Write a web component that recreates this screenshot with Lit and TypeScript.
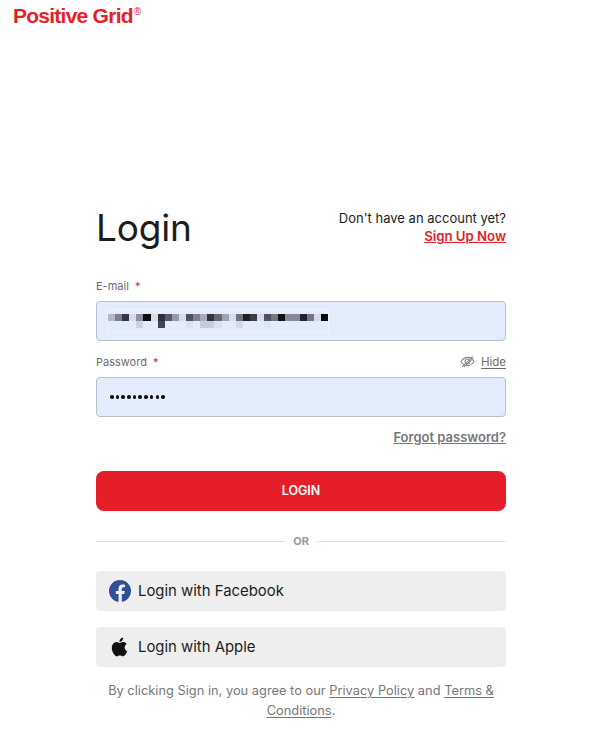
import { LitElement, html, css } from 'lit';
import { customElement } from 'lit/decorators.js';

// mosaic that hides the e-mail address, one colour per 7px cell ('' = empty)
const ROW_1 = [
  '#b4b8c6', '#7c808c', '#34363e', '#d6dcea', '#8e929e', '#0e0e12', '#d6dcea', '#2e3038', '#585a66', '#949aa8',
  '#d6dcea', '#50525c', '#7e828e', '#a8acb8', '#34363e', '#666874', '#a0a4b0', '#d6dcea', '#70747e', '#1e2026',
  '#3c3e48', '#d6dcea', '#50525c', '#747884', '#111318', '#868a96', '#868a96', '#22242a', '#747884', '#d6dcea', '#07080a',
];
const ROW_2 = [
  '', '', '', '', '#cdd2de', '', '', '#44464f', '', '',
  '', '#dae0ec', '', '#c8ccd8', '#c8ccd8', '#dae0ec', '', '', '#d4d9e5', '',
  '', '', '#dde4f2', '', '', '', '', '', '', '', '',
];

@customElement('app-root')
export class AppRoot extends LitElement {
  static styles = css`
    :host {
      display: block;
      background: #fff;
      height: 736px;
      overflow: hidden;
      font-family: 'Inter', 'Liberation Sans', sans-serif;
      color: #1c1c1c;
    }
    .logo {
      display: flex;
      align-items: flex-start;
      padding: 4px 0 0 13px;
      height: 172px;
      color: #e51e29;
      font-family: 'Liberation Sans', sans-serif;
      font-weight: 700;
      font-size: 21px;
      line-height: 24px;
      letter-spacing: -0.75px;
    }
    .logo sup {
      font-size: 10px;
      line-height: 10px;
      letter-spacing: 0;
      margin: 3px 0 0 1px;
      font-weight: 400;
    }
    main {
      width: 410px;
      margin-left: 96px;
    }
    .head {
      display: flex;
      justify-content: space-between;
      align-items: flex-start;
      box-sizing: border-box;
      height: 100px;
      padding-top: 28px;
    }
    h1 {
      margin: 0;
      font-size: 37px;
      font-weight: 400;
      line-height: 48px;
      letter-spacing: -0.2px;
    }
    .signup {
      text-align: right;
      font-size: 13px;
      line-height: 18px;
      padding-top: 5px;
    }
    .signup a {
      display: block;
      color: #e51e29;
      font-weight: 600;
      font-size: 13.2px;
      text-decoration: underline;
    }
    .label-row {
      display: flex;
      justify-content: space-between;
      align-items: center;
      box-sizing: border-box;
      height: 18px;
      padding-top: 1px;
      margin-bottom: 7px;
      font-size: 11px;
      color: #6b6b6b;
    }
    .label-row b {
      color: #e51e29;
      font-weight: 400;
      margin-left: 3px;
    }
    .hide {
      display: flex;
      align-items: center;
      gap: 6px;
      font-size: 11.5px;
    }
    .hide svg {
      width: 15px;
      height: 15px;
    }
    .hide u {
      text-underline-offset: 2px;
    }
    .field {
      display: flex;
      align-items: center;
      height: 40px;
      box-sizing: border-box;
      background: #e2ecfb;
      border: 1px solid #bcc0c6;
      border-radius: 4px;
      padding-left: 10px;
      margin-bottom: 11px;
    }
    .mosaic {
      display: grid;
      grid-template-columns: repeat(31, 7.1px);
      grid-auto-rows: 7px;
      align-content: center;
      height: 24px;
      width: 222px;
      border: 1px solid #edf3fd;
      box-sizing: border-box;
    }
    .dots {
      display: flex;
      gap: 2.1px;
      padding-left: 3px;
    }
    .dots i {
      width: 3.6px;
      height: 3.6px;
      border-radius: 50%;
      background: #111;
    }
    .forgot {
      text-align: right;
      font-size: 13px;
      line-height: 18px;
      font-weight: 600;
      color: #77777a;
      text-decoration: underline;
    }
    .login {
      height: 40px;
      box-sizing: border-box;
      padding-bottom: 2px;
      margin-top: 25px;
      border-radius: 8px;
      background: #e51e29;
      color: #fff;
      font-size: 12.5px;
      font-weight: 600;
      display: flex;
      align-items: center;
      justify-content: center;
    }
    .or {
      display: flex;
      align-items: center;
      gap: 8px;
      margin: 20px 0 20px;
      height: 20px;
      font-size: 11px;
      font-weight: 700;
      color: #999;
    }
    .or::before,
    .or::after {
      content: '';
      flex: 1;
      height: 1px;
      background: #e2e2e4;
    }
    .social {
      display: flex;
      align-items: center;
      gap: 7px;
      height: 40px;
      margin-bottom: 16px;
      padding-left: 13px;
      border-radius: 4px;
      background: #eeeeee;
      font-size: 14.9px;
    }
    .social span {
      margin-top: -1px;
    }
    .social svg {
      width: 22px;
      height: 22px;
      flex: none;
    }
    .terms {
      margin: -2px 0 0;
      text-align: center;
      font-size: 12.85px;
      line-height: 20px;
      color: #77777a;
    }
    .terms u {
      text-underline-offset: 2px;
    }
  `;

  private eyeOff() {
    return html`<svg viewBox="0 0 16 16" fill="none" stroke="#8a8a8a" stroke-width="1.1">
      <path d="M1 8c2-3 4.3-4.4 7-4.4S13 5 15 8c-2 3-4.3 4.4-7 4.4S3 11 1 8z"/>
      <circle cx="8" cy="8" r="2.6"/>
      <path d="M2.5 13.5 13.5 2.5M4 14 14.5 4"/>
    </svg>`;
  }

  private facebook() {
    return html`<svg viewBox="0 0 24 24">
      <circle cx="12" cy="12" r="12" fill="#2f4f93"/>
      <path fill="#eee" d="M16.7 15.4l.5-3.4H14V9.8c0-.9.5-1.8 1.9-1.8h1.5V5.1S16 4.9 14.8 4.9c-2.7 0-4.4 1.6-4.4 4.6V12h-3v3.4h3V24h3.6v-8.6z"/>
    </svg>`;
  }

  private apple() {
    return html`<svg viewBox="0 0 24 24">
      <path fill="#111" d="M17.05 12.54c-.03-2.6 2.12-3.85 2.22-3.91-1.21-1.77-3.09-2.01-3.76-2.04-1.6-.16-3.12.94-3.93.94-.81 0-2.06-.92-3.39-.89-1.74.03-3.35 1.01-4.25 2.57-1.81 3.14-.46 7.8 1.3 10.35.86 1.25 1.89 2.65 3.24 2.6 1.3-.05 1.79-.84 3.36-.84s2.01.84 3.39.81c1.4-.02 2.29-1.27 3.14-2.53.99-1.45 1.4-2.86 1.42-2.93-.03-.01-2.72-1.04-2.74-4.13zM14.47 4.9c.72-.87 1.2-2.08 1.07-3.28-1.03.04-2.28.69-3.02 1.55-.66.77-1.24 2-1.09 3.18 1.15.09 2.33-.58 3.04-1.45z"/>
    </svg>`;
  }

  render() {
    return html`
      <div class="logo">Positive Grid<sup>®</sup></div>
      <main>
        <div class="head">
          <h1>Login</h1>
          <div class="signup">Don't have an account yet?<a>Sign Up Now</a></div>
        </div>
        <div class="label-row"><span>E-mail <b>*</b></span></div>
        <div class="field">
          <div class="mosaic">
            ${[...ROW_1, ...ROW_2].map((c) => html`<i style="background:${c || 'transparent'}"></i>`)}
          </div>
        </div>
        <div class="label-row">
          <span>Password <b>*</b></span>
          <span class="hide">${this.eyeOff()}<u>Hide</u></span>
        </div>
        <div class="field">
          <div class="dots">${Array.from({ length: 10 }, () => html`<i></i>`)}</div>
        </div>
        <div class="forgot">Forgot password?</div>
        <div class="login">LOGIN</div>
        <div class="or">OR</div>
        <div class="social">${this.facebook()}<span>Login with Facebook</span></div>
        <div class="social">${this.apple()}<span>Login with Apple</span></div>
        <p class="terms">By clicking Sign in, you agree to our <u>Privacy Policy</u> and <u>Terms &amp;</u> <u>Conditions</u>.</p>
      </main>
    `;
  }
}
